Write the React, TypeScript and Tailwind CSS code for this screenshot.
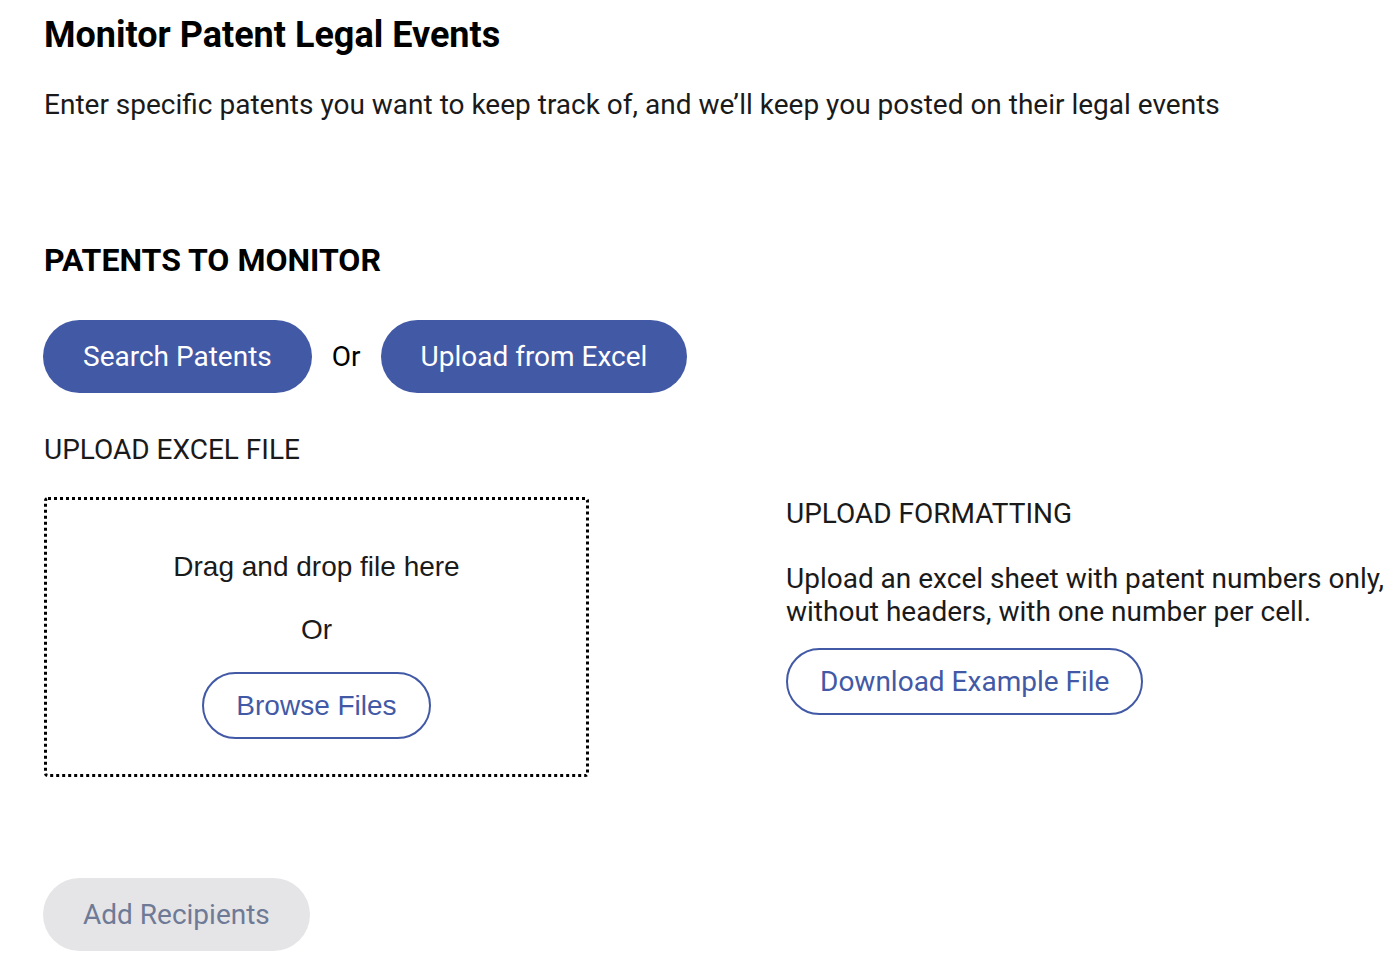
import React from "react";

const roboto = { fontFamily: "Roboto, 'Liberation Sans', sans-serif" };
const helv = { fontFamily: "'Liberation Sans', Arial, sans-serif" };

export default function App() {
  return (
    <div className="min-h-screen bg-white text-black overflow-hidden" style={roboto}>
      <div className="pl-[44px] pt-[13px]">
        <h1 className="text-[36px] leading-[44px] font-bold text-black">Monitor Patent Legal Events</h1>
        <p className="mt-[31px] text-[28px] leading-[34px] text-[#1a1a1a]">
          Enter specific patents you want to keep track of, and we’ll keep you posted on their legal events
        </p>

        <h2 className="mt-[119px] text-[32px] leading-[38px] font-bold text-black">PATENTS TO MONITOR</h2>

        <div className="mt-[41px] flex items-center gap-5 -ml-px">
          <button className="h-[73px] px-[40px] rounded-full bg-[#4259a6] text-white text-[28px]">Search Patents</button>
          <span className="text-[28px] text-black">Or</span>
          <button className="h-[73px] px-[40px] rounded-full bg-[#4259a6] text-white text-[28px]">Upload from Excel</button>
        </div>

        <div className="mt-[40px] text-[28px] leading-[34px] text-[#1a1a1a]">UPLOAD EXCEL FILE</div>

        <div className="mt-[30px] flex items-start">
          <div
            className="w-[545px] h-[280px] border-[3px] border-dotted border-black rounded-[4px] flex flex-col items-center pt-[51px]"
            style={helv}
          >
            <div className="text-[28px] leading-[32px] text-[#1a1a1a]">Drag and drop file here</div>
            <div className="mt-[31px] text-[28px] leading-[32px] text-[#1a1a1a]">Or</div>
            <button
              className="mt-[26px] h-[67px] px-[32px] rounded-full border-2 border-[#4259a6] text-[#4259a6] text-[28px] bg-white"
              style={helv}
            >
              Browse Files
            </button>
          </div>

          <div className="ml-[197px] w-[606px]">
            <div className="text-[28px] leading-[34px] text-[#1a1a1a]">UPLOAD FORMATTING</div>
            <p className="mt-[31px] text-[28px] leading-[33px] text-[#1a1a1a]">
              Upload an excel sheet with patent numbers only,
              <br />
              without headers, with one number per cell.
            </p>
            <button className="mt-[20px] h-[67px] px-[32px] rounded-full border-2 border-[#4259a6] text-[#4259a6] text-[28px] bg-white">
              Download Example File
            </button>
          </div>
        </div>

        <button className="mt-[101px] -ml-px h-[73px] px-[40px] rounded-full bg-[#e5e5e7] text-[#6e7a96] text-[28px]">
          Add Recipients
        </button>
      </div>
    </div>
  );
}
